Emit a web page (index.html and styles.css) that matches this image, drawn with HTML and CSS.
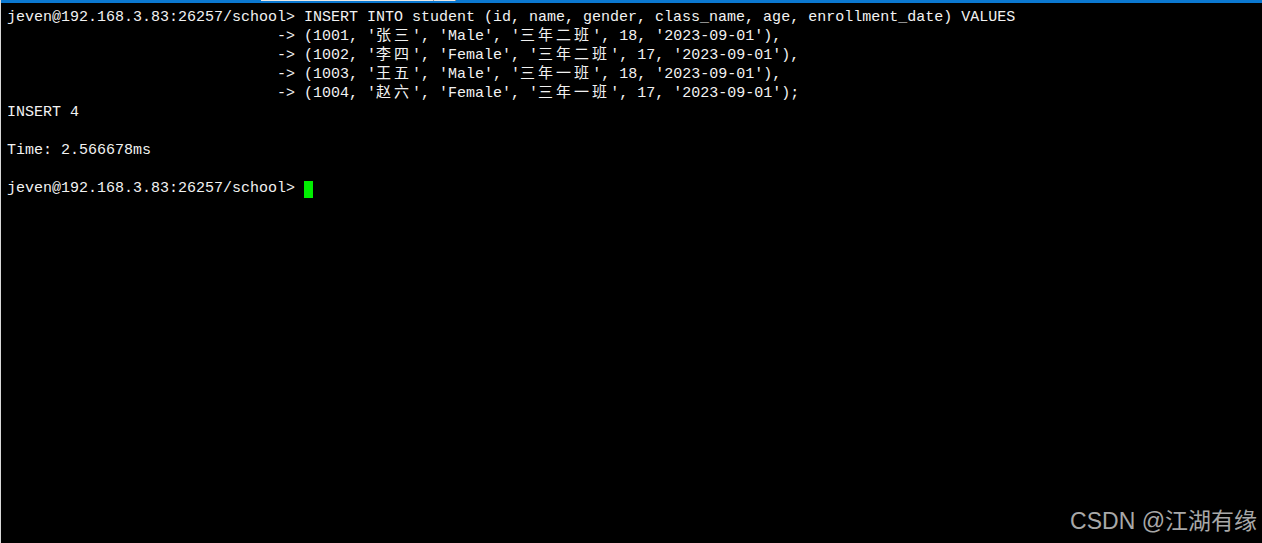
FILE: index.html
```html
<!DOCTYPE html>
<html>
<head>
<meta charset="utf-8">
<link rel="stylesheet" href="styles.css">
</head>
<body>
<div class="window">
  <div class="topbar">
    <div class="strip">
      <span class="seg blue s1"></span>
      <span class="seg white s2"></span>
      <span class="seg grey"></span>
      <span class="seg white s3"></span>
      <span class="seg grey"></span>
      <span class="seg blue fill"></span>
    </div>
    <div class="bar"></div>
  </div>
  <pre class="term">jeven@192.168.3.83:26257/school&gt; INSERT INTO student (id, name, gender, class_name, age, enrollment_date) VALUES
                              -&gt; (1001, '<span class="cjk">张三</span>', 'Male', '<span class="cjk">三年二班</span>', 18, '2023-09-01'),
                              -&gt; (1002, '<span class="cjk">李四</span>', 'Female', '<span class="cjk">三年二班</span>', 17, '2023-09-01'),
                              -&gt; (1003, '<span class="cjk">王五</span>', 'Male', '<span class="cjk">三年一班</span>', 18, '2023-09-01'),
                              -&gt; (1004, '<span class="cjk">赵六</span>', 'Female', '<span class="cjk">三年一班</span>', 17, '2023-09-01');
INSERT 4

Time: 2.566678ms

jeven@192.168.3.83:26257/school&gt; <span class="cursor"></span></pre>
  <div class="watermark">CSDN @江湖有缘</div>
</div>
</body>
</html>
```

FILE: styles.css
```css
html, body {
  margin: 0;
  padding: 0;
  background: #000;
}
.window {
  position: relative;
  width: 1262px;
  height: 543px;
  background: #000;
  border-left: 1px solid #d8d8d8;
  box-sizing: border-box;
  overflow: hidden;
}
.topbar {
  display: flex;
  flex-direction: column;
}
.strip {
  display: flex;
  height: 1px;
}
.seg { display: block; height: 1px; }
.seg.blue { background: #0b78d0; }
.seg.white { background: #e8e8e8; }
.seg.grey { background: #9a9a9a; width: 1px; }
.s1 { width: 260px; }
.s2 { width: 172px; }
.s3 { width: 21px; }
.fill { flex: 1; }
.bar {
  height: 2px;
  background: #0b78d0;
}
.term {
  margin: 0;
  padding: 5px 0 0 6px;
  font-family: "Liberation Mono", "DejaVu Sans Mono", monospace;
  font-size: 15px;
  line-height: 19px;
  color: #f2f2f2;
  white-space: pre;
}
.cjk {
  font-family: "Noto Sans CJK SC", "Liberation Mono", monospace;
  letter-spacing: 3px;
  font-size: 15px;
  line-height: 1px;
}
.cursor {
  display: inline-block;
  width: 9px;
  height: 17px;
  margin-top: 2px;
  background: #00ee00;
  vertical-align: top;
}
.watermark {
  position: absolute;
  right: 5px;
  bottom: 9px;
  font-family: "Liberation Sans", "Noto Sans CJK SC", sans-serif;
  font-size: 23px;
  line-height: 26px;
  color: #a8a8a8;
}
```
